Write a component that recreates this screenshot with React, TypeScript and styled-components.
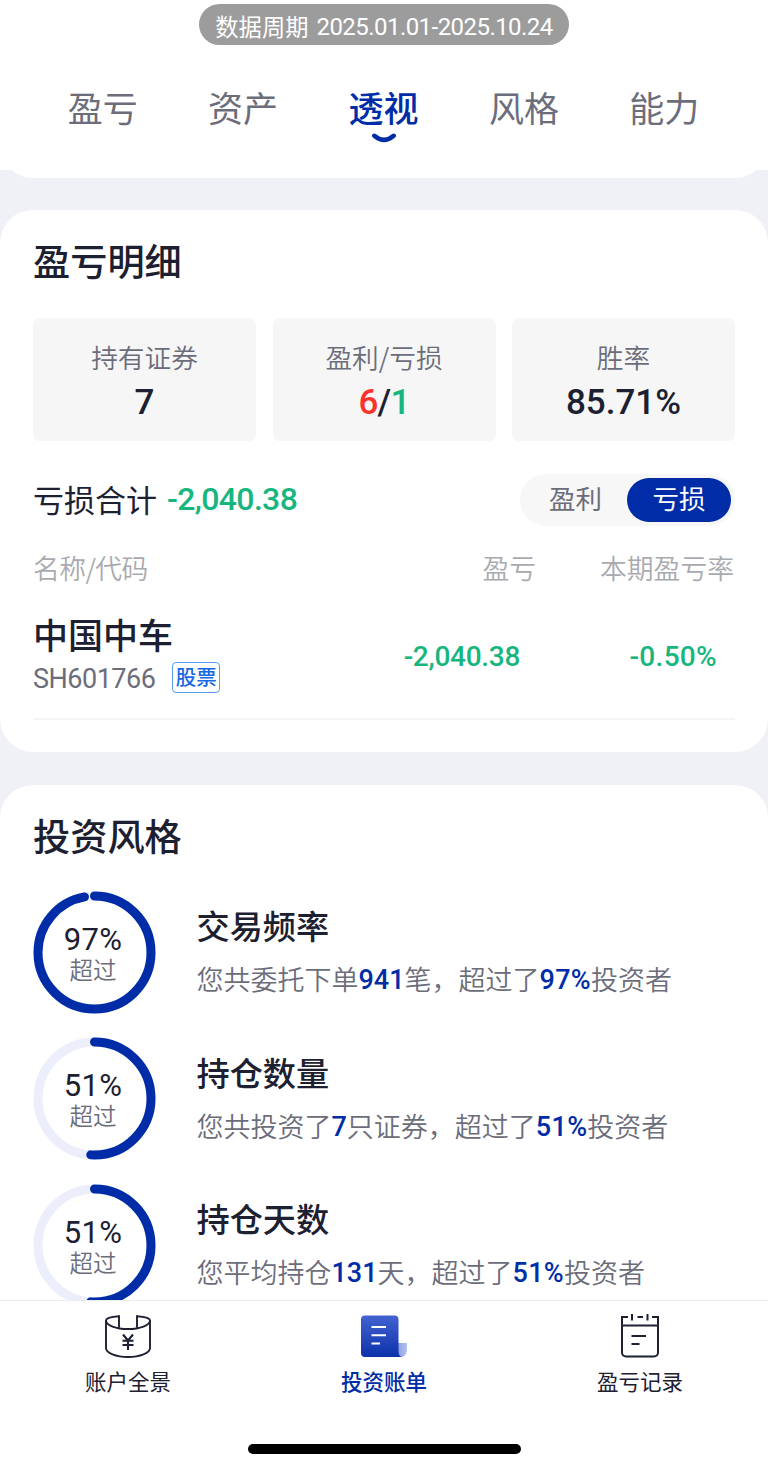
import React from "react";
import styled, { createGlobalStyle } from "styled-components";

const color = {
  blue: "#002da7",
  ink: "#1c2030",
  gray: "#6c6d7a",
  light: "#a9aab0",
  green: "#17b67f",
  red: "#fd322b",
  page: "#f0f1f6",
};

const cjk = `"Noto Sans CJK SC", sans-serif`;

const GlobalStyle = createGlobalStyle`
  * { box-sizing: border-box; }
  body {
    margin: 0;
    background: ${color.page};
    color: ${color.ink};
    font-family: ${cjk};
  }
`;

const Screen = styled.div`
  display: flex;
  flex-direction: column;
  width: 768px;
  height: 1470px;
  overflow: hidden;
  background: ${color.page};
`;

const Header = styled.header`
  flex: none;
  display: flex;
  flex-direction: column;
  align-items: center;
  height: 170px;
  padding-top: 4px;
  background: #fff;
`;

const Period = styled.div`
  display: flex;
  align-items: center;
  justify-content: center;
  gap: 8px;
  width: 370px;
  height: 41px;
  padding-top: 3px;
  border-radius: 21px;
  background: #9c9c9c;
  color: #fff;
  font-size: 23.3px;
  line-height: 38px;
`;

const Num = styled.span<{ $size: number; $weight?: number; $spacing?: number; $color?: string }>`
  font-family: Roboto, sans-serif;
  font-size: ${(p) => p.$size}px;
  font-weight: ${(p) => p.$weight ?? 500};
  letter-spacing: ${(p) => p.$spacing ?? 0}px;
  color: ${(p) => p.$color ?? "inherit"};
`;

const PeriodDates = styled(Num)`
  padding-top: 1px;
`;

const Tabs = styled.nav`
  display: flex;
  width: 702px;
  margin-top: 36px;
`;

const Tab = styled.div<{ $active?: boolean }>`
  flex: 1;
  display: flex;
  flex-direction: column;
  align-items: center;
  font-size: 35px;
  line-height: 52px;
  font-weight: ${(p) => (p.$active ? 500 : 400)};
  color: ${(p) => (p.$active ? color.blue : color.gray)};
`;

const TabLabel = styled.span`
  margin-right: 1px;
`;

const Smile = styled.svg`
  width: 26px;
  height: 11px;
  display: block;
`;

const Content = styled.main`
  flex: 1;
  min-height: 0;
  overflow: hidden;
`;

const PreviousCard = styled.div`
  height: 41px;
  margin-top: -33px;
  border-radius: 0 0 33px 33px;
  background: #fff;
`;

const Section = styled.section<{ $height?: number }>`
  margin-top: ${(p) => (p.$height ? 32 : 33)}px;
  height: ${(p) => (p.$height ? `${p.$height}px` : "auto")};
  padding: 30px 33px 33px;
  border-radius: 33px;
  background: #fff;
`;

const SectionTitle = styled.h2<{ $gap: number }>`
  margin: 0 0 ${(p) => p.$gap}px;
  font-size: 37.2px;
  line-height: 40px;
  font-weight: 500;
`;

const Stats = styled.div`
  display: grid;
  grid-template-columns: repeat(3, 1fr);
  gap: 16.5px;
`;

const Stat = styled.div`
  height: 123px;
  padding-top: 24px;
  border-radius: 7px;
  background: #f6f6f7;
  text-align: center;
`;

const StatLabel = styled.div`
  font-size: 26.7px;
  line-height: 30px;
  font-weight: 350;
  color: ${color.gray};
`;

const StatValue = styled.div`
  margin-top: 10px;
  line-height: 41px;
  display: flex;
  justify-content: center;
`;

const TotalRow = styled.div`
  display: flex;
  align-items: center;
  justify-content: space-between;
  height: 52px;
  margin-top: 33px;
`;

const Total = styled.div`
  display: flex;
  align-items: center;
  gap: 10px;
  height: 46px;
  margin-bottom: 2px;
  font-size: 31px;
  line-height: 46px;
`;

const Toggle = styled.div`
  display: flex;
  align-items: center;
  width: 215px;
  height: 52px;
  padding: 4px;
  border-radius: 26px;
  background: #f7f7f7;
`;

const ToggleItem = styled.div<{ $active?: boolean }>`
  width: ${(p) => (p.$active ? 104 : 103)}px;
  height: 44px;
  border-radius: 22px;
  font-size: 26.5px;
  line-height: 40px;
  text-align: center;
  color: ${(p) => (p.$active ? "#fff" : color.gray)};
  background: ${(p) => (p.$active ? color.blue : "transparent")};
`;

const TableHead = styled.div`
  display: grid;
  grid-template-columns: 1fr 99px 198px;
  margin-top: 27px;
  padding-right: 1px;
  font-size: 26.8px;
  line-height: 30px;
  font-weight: 350;
  color: ${color.light};
  text-align: right;

  & > :first-child {
    text-align: left;
    letter-spacing: -0.6px;
  }
`;

const HoldingRow = styled.div`
  display: grid;
  grid-template-columns: 1fr 200px 197px;
  align-items: center;
  margin-top: 30px;
  padding-bottom: 25px;
  border-bottom: 2px solid #f5f5f6;
  color: ${color.green};
  text-align: right;
`;

const AmountCell = styled.div<{ $inset: number }>`
  padding: 8px ${(p) => p.$inset}px 0 0;
`;

const Holding = styled.div`
  color: ${color.ink};
  text-align: left;
`;

const HoldingName = styled.div`
  font-size: 35px;
  line-height: 41px;
  font-weight: 500;
`;

const HoldingCode = styled.div`
  display: flex;
  align-items: center;
  gap: 17px;
  height: 31px;
  margin-top: 8px;
  line-height: 33px;
  color: ${color.gray};
`;

const CodeText = styled(Num)`
  padding-top: 4px;
`;

const Tag = styled.span`
  width: 48px;
  height: 31px;
  border: 1.5px solid #5b9bf0;
  border-radius: 4px;
  font-size: 20.5px;
  line-height: 26px;
  font-weight: 500;
  text-align: center;
  color: #1668e3;
`;

const StyleList = styled.div`
  display: flex;
  flex-direction: column;
  gap: 23.5px;
`;

const StyleItem = styled.div`
  display: flex;
  gap: 40.5px;
  height: 123px;
`;

const Ring = styled.div`
  position: relative;
  width: 123px;
  height: 123px;
`;

const RingSvg = styled.svg`
  display: block;
`;

const RingText = styled.div`
  position: absolute;
  inset: 0;
  padding-top: 34px;
  display: flex;
  flex-direction: column;
  align-items: center;
  margin-right: 3px;
  line-height: 30px;
`;

const RingCaption = styled.div`
  font-size: 23.5px;
  line-height: 28px;
  font-weight: 350;
  color: ${color.gray};
`;

const StyleBody = styled.div`
  padding-top: 14.5px;
  white-space: nowrap;
`;

const StyleTitle = styled.div`
  font-size: 33.2px;
  line-height: 40px;
  font-weight: 500;
`;

const StyleDesc = styled.div`
  margin-top: 17px;
  display: flex;
  font-size: 27px;
  line-height: 34px;
  font-weight: 350;
  color: ${color.gray};
`;

const DescNum = styled(Num)`
  padding-top: 1px;
`;

const BottomNav = styled.nav`
  flex: none;
  display: flex;
  flex-direction: column;
  align-items: center;
  height: 170px;
  border-top: 1.5px solid #ededf0;
  background: #fff;
`;

const NavItems = styled.div`
  display: flex;
  width: 100%;
  height: 143px;
`;

const NavItem = styled.div<{ $active?: boolean }>`
  flex: 1;
  display: flex;
  flex-direction: column;
  align-items: center;
  padding-top: 11px;
  font-size: 21.5px;
  line-height: 30px;
  font-weight: ${(p) => (p.$active ? 500 : 400)};
  color: ${(p) => (p.$active ? color.blue : color.ink)};
`;

const NavIcon = styled.svg`
  width: 52px;
  height: 48px;
  margin-bottom: 6px;
`;

const HomeIndicator = styled.div`
  width: 273px;
  height: 10px;
  border-radius: 5px;
  background: #000;
`;

function PercentRing({ value }: { value: number }) {
  const r = 56.5;
  const length = 2 * Math.PI * r;
  return (
    <Ring>
      <RingSvg width="123" height="123" viewBox="0 0 123 123" fill="none" strokeWidth="9">
        <circle cx="61.5" cy="61.5" r={r} stroke="#eceefc" />
        <circle
          cx="61.5"
          cy="61.5"
          r={r}
          stroke={color.blue}
          strokeLinecap="round"
          strokeDasharray={`${(length * value) / 100} ${length}`}
          transform="rotate(-90 61.5 61.5)"
        />
      </RingSvg>
      <RingText>
        <Num $size={31} $weight={450} $spacing={0.3}>{value}%</Num>
        <RingCaption>超过</RingCaption>
      </RingText>
    </Ring>
  );
}

const AccountIcon = () => (
  <NavIcon viewBox="0 0 52 48" fill="none" stroke={color.ink} strokeWidth="1.9">
    <path d="M4 8.5V36c0 5 10 9 22 9s22-4 22-9V8.5" />
    <path d="M17 4.2C9 4.7 4 6.3 4 8.5c0 4.7 10 8.5 22 8.5s22-3.8 22-8.5c0-2.2-5-3.8-13-4.3" />
    <path d="M17 3.3v12.5M35 3.3v12.5" />
    <path d="M21 22.5l5 6 5-6M26 28.5V38M20.5 28.7h11M20.5 33h11" strokeWidth="2.1" />
  </NavIcon>
);

const BillIcon = () => (
  <NavIcon viewBox="0 0 52 48">
    <defs>
      <linearGradient id="bill" x1="0" y1="0" x2="0" y2="1">
        <stop offset="0" stopColor="#4363d0" />
        <stop offset="1" stopColor="#0c31aa" />
      </linearGradient>
      <linearGradient id="curl" x1="0" y1="0" x2="1" y2="0">
        <stop offset="0" stopColor="#7f93de" />
        <stop offset="1" stopColor="#b4c1ef" />
      </linearGradient>
    </defs>
    <path d="M39.5 31H49v6.500c0 4.500-2.500 7.500-6 7.500h-7z" fill="url(#curl)" />
    <path
      d="M7 3.5h29.500a4 4 0 0 1 4 4V38c0 4 .8 6 3 7H7a4 4 0 0 1-4-4V7.5a4 4 0 0 1 4-4z"
      fill="url(#bill)"
    />
    <path d="M13.5 15H28M13.5 23.3H28M13.5 31.5H22" stroke="#fff" strokeWidth="2" fill="none" />
  </NavIcon>
);

const RecordIcon = () => (
  <NavIcon viewBox="0 0 52 48" fill="none" stroke={color.ink} strokeWidth="2">
    <path d="M14 5H8v35.5a4 4 0 0 0 4 4h28a4 4 0 0 0 4-4V5h-6" />
    <path d="M23.5 5H29M18 2v6.500M33.5 2v6.500M8 13.5h36M17.5 24H32M17.5 32h8" />
  </NavIcon>
);

const tabs = ["盈亏", "资产", "透视", "风格", "能力"];

const styles = [
  { value: 97, title: "交易频率", before: "您共委托下单", count: "941", after: "笔\uff0c超过了" },
  { value: 51, title: "持仓数量", before: "您共投资了", count: "7", after: "只证券\uff0c超过了" },
  { value: 51, title: "持仓天数", before: "您平均持仓", count: "131", after: "天\uff0c超过了" },
];

export default function App() {
  return (
    <Screen lang="zh-CN">
      <GlobalStyle />
      <Header>
        <Period>
          <span>数据周期</span>
          <PeriodDates $size={24} $weight={400} $spacing={-0.55}>2025.01.01-2025.10.24</PeriodDates>
        </Period>
        <Tabs>
          {tabs.map((name) => (
            <Tab key={name} $active={name === "透视"}>
              <TabLabel>{name}</TabLabel>
              {name === "透视" && (
                <Smile viewBox="0 0 26 11" fill="none">
                  <path d="M3.3 2.8Q13 11 22.7 2.8" stroke={color.blue} strokeWidth="4.5" strokeLinecap="round" />
                </Smile>
              )}
            </Tab>
          ))}
        </Tabs>
      </Header>
      <Content>
        <PreviousCard />
        <Section $height={541.5}>
          <SectionTitle $gap={37.5}>盈亏明细</SectionTitle>
          <Stats>
            <Stat>
              <StatLabel>持有证券</StatLabel>
              <StatValue><Num $size={35}>7</Num></StatValue>
            </Stat>
            <Stat>
              <StatLabel>盈利/亏损</StatLabel>
              <StatValue>
                <Num $size={35} $spacing={-0.8} $color={color.red}>6</Num>
                <Num $size={35} $spacing={-0.8}>/</Num>
                <Num $size={35} $spacing={-0.8} $color={color.green}>1</Num>
              </StatValue>
            </Stat>
            <Stat>
              <StatLabel>胜率</StatLabel>
              <StatValue><Num $size={35}>85.71%</Num></StatValue>
            </Stat>
          </Stats>
          <TotalRow>
            <Total>
              <span>亏损合计</span>
              <Num $size={32} $spacing={-0.65} $color={color.green}>-2,040.38</Num>
            </Total>
            <Toggle>
              <ToggleItem>盈利</ToggleItem>
              <ToggleItem $active>亏损</ToggleItem>
            </Toggle>
          </TotalRow>
          <TableHead>
            <div>名称/代码</div>
            <div>盈亏</div>
            <div>本期盈亏率</div>
          </TableHead>
          <HoldingRow>
            <Holding>
              <HoldingName>中国中车</HoldingName>
              <HoldingCode>
                <CodeText $size={27} $weight={450} $spacing={-0.5}>SH601766</CodeText>
                <Tag>股票</Tag>
              </HoldingCode>
            </Holding>
            <AmountCell $inset={18}><Num $size={28} $spacing={-0.3}>-2,040.38</Num></AmountCell>
            <AmountCell $inset={18}><Num $size={28} $spacing={0.3}>-0.50%</Num></AmountCell>
          </HoldingRow>
        </Section>
        <Section>
          <SectionTitle $gap={36}>投资风格</SectionTitle>
          <StyleList>
            {styles.map((s) => (
              <StyleItem key={s.title}>
                <PercentRing value={s.value} />
                <StyleBody>
                  <StyleTitle>{s.title}</StyleTitle>
                  <StyleDesc>
                    <span>{s.before}</span>
                    <DescNum $size={27} $color={color.blue}>{s.count}</DescNum>
                    <span>{s.after}</span>
                    <DescNum $size={27} $color={color.blue} $spacing={0.3}>{s.value}%</DescNum>
                    <span>投资者</span>
                  </StyleDesc>
                </StyleBody>
              </StyleItem>
            ))}
          </StyleList>
        </Section>
      </Content>
      <BottomNav>
        <NavItems>
          <NavItem><AccountIcon />账户全景</NavItem>
          <NavItem $active><BillIcon />投资账单</NavItem>
          <NavItem><RecordIcon />盈亏记录</NavItem>
        </NavItems>
        <HomeIndicator />
      </BottomNav>
    </Screen>
  );
}
